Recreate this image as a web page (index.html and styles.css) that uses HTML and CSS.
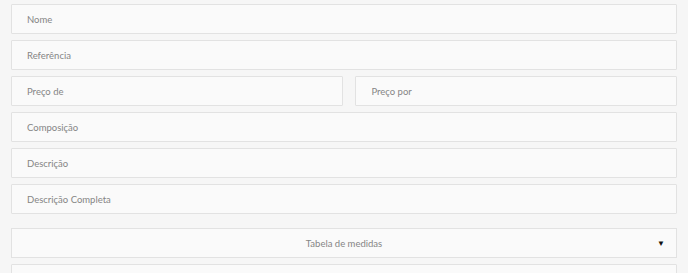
FILE: index.html
```html
<!DOCTYPE html>
<html lang="pt-BR">
<head>
  <meta charset="UTF-8">
  <title>Cadastro de Produto</title>
  <link rel="stylesheet" href="styles.css">
</head>
<body>
  <form class="formulario">
    <input class="campo" type="text" placeholder="Nome">
    <input class="campo" type="text" placeholder="Referência">
    <div class="linha-dupla">
      <input class="campo campo-de" type="text" placeholder="Preço de">
      <input class="campo campo-por" type="text" placeholder="Preço por">
    </div>
    <input class="campo" type="text" placeholder="Composição">
    <input class="campo" type="text" placeholder="Descrição">
    <input class="campo" type="text" placeholder="Descrição Completa">

    <div class="selecao">
      <span>Tabela de medidas</span>
      <span class="seta">&#9660;</span>
    </div>
    <input class="campo" type="text">
  </form>
</body>
</html>
```

FILE: styles.css
```css
:root {
  --fundo: #f6f6f6;
  --campo: #fafafa;
  --borda: #e2e2e2;
  --texto: #858585;
}

body {
  margin: 0;
  padding: 4px 11px 0;
  background-color: var(--fundo);
  font-family: 'Lato', 'Liberation Sans', sans-serif;
  overflow: hidden;
}

.formulario {
  display: flex;
  flex-direction: column;
  gap: 6px;
}

.campo {
  box-sizing: border-box;
  width: 100%;
  height: 30px;
  padding: 0 15px;
  border: 1px solid var(--borda);
  border-radius: 1px;
  background-color: var(--campo);
  font-family: inherit;
  font-size: 9.5px;
  color: var(--texto);
  outline: none;
}

.campo::placeholder {
  color: var(--texto);
}

.linha-dupla {
  display: flex;
  gap: 12px;
}

.campo-de {
  flex: 333;
  min-width: 0;
}

.campo-por {
  flex: 321;
  min-width: 0;
}

.selecao {
  box-sizing: border-box;
  height: 30px;
  margin-top: 8px;
  border: 1px solid var(--borda);
  background-color: var(--campo);
  display: flex;
  align-items: center;
  justify-content: center;
  position: relative;
  font-size: 9.5px;
  color: var(--texto);
}

.seta {
  position: absolute;
  right: 11px;
  font-size: 8px;
  color: #111;
}
```
